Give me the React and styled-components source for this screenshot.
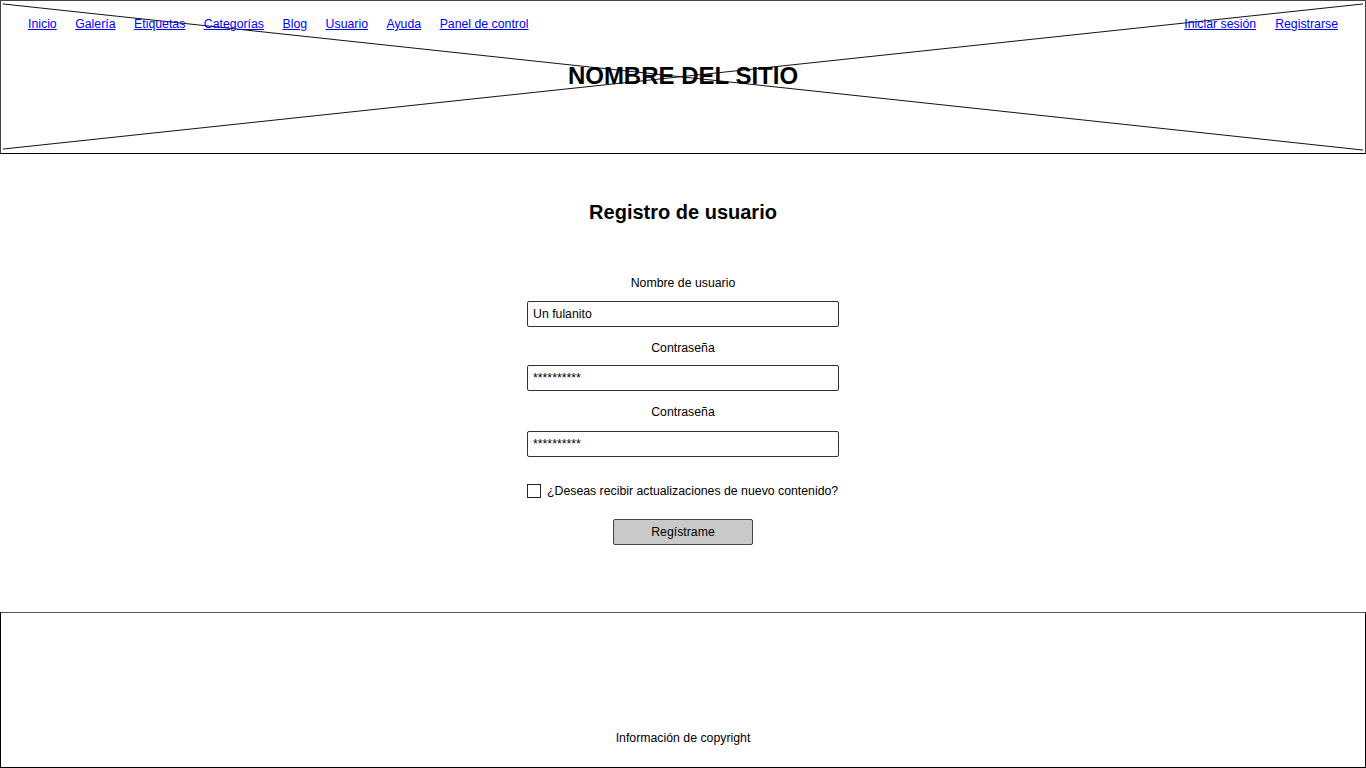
import styled, { createGlobalStyle } from "styled-components";

const GlobalStyle = createGlobalStyle`
  html, body {
    margin: 0;
    padding: 0;
    background: #fff;
  }
  body {
    font-family: "Liberation Sans", Arial, sans-serif;
    color: #000;
  }
`;

const hand = `font-family: "Comic Sans MS", "Liberation Sans", Arial, sans-serif; font-size: 12.3px;`;

const Page = styled.div`
  width: 1366px;
  height: 768px;
  display: flex;
  flex-direction: column;
  overflow: hidden;
`;

const Header = styled.header`
  position: relative;
  height: 154px;
  box-sizing: border-box;
  border: 1px solid #444;
  border-bottom-color: #000;
  display: flex;
  flex-direction: column;
`;

// placeholder image cross behind the header contents
const Cross = styled.svg`
  position: absolute;
  inset: 0;
  width: 100%;
  height: 100%;
  pointer-events: none;
`;

const NavBar = styled.nav`
  position: relative;
  display: flex;
  justify-content: space-between;
  padding: 14px 27px 0 27px;
  height: 18px;
`;

const NavGroup = styled.div`
  display: flex;
  gap: ${(p) => p.$gap || 18.5}px;
`;

const NavLink = styled.a`
  ${hand}
  color: #0000ff;
  text-decoration: underline;
  line-height: 18px;
  cursor: pointer;
`;

const SiteName = styled.h1`
  position: relative;
  margin: 29px 0 0;
  text-align: center;
  font-size: 24px;
  line-height: 28px;
  font-weight: bold;
  font-family: "Liberation Sans", Arial, sans-serif;
`;

const Main = styled.main`
  flex: 1;
  display: flex;
  flex-direction: column;
  align-items: center;
  padding-top: 46px;
`;

const Title = styled.h2`
  margin: 0 0 51px;
  font-size: 20px;
  line-height: 24px;
  font-weight: bold;
`;

const Form = styled.form`
  width: 312px;
  display: flex;
  flex-direction: column;
  align-items: center;
`;

const Label = styled.label`
  ${hand}
  line-height: 16px;
  margin-top: ${(p) => p.$top || 0}px;
  margin-bottom: ${(p) => p.$bottom || 10}px;
`;

const TextInput = styled.input`
  ${hand}
  width: 312px;
  height: 26px;
  box-sizing: border-box;
  border: 1px solid #333;
  border-radius: 2px;
  padding: 0 5px;
  color: #000;
  background: #fff;
  outline: none;
`;

const CheckRow = styled.label`
  ${hand}
  align-self: stretch;
  display: flex;
  align-items: center;
  gap: 6px;
  line-height: 16px;
  margin-top: 26px;
  white-space: nowrap;
`;

const Check = styled.input`
  appearance: none;
  margin: 0;
  width: 14px;
  height: 14px;
  box-sizing: border-box;
  border: 1px solid #222;
  background: #fff;
  flex: none;
`;

const Button = styled.button`
  ${hand}
  margin-top: 20px;
  width: 140px;
  height: 26px;
  box-sizing: border-box;
  border: 1px solid #444;
  border-radius: 2px;
  background: #c9c9c9;
  color: #000;
  padding: 0;
  cursor: pointer;
`;

const Footer = styled.footer`
  height: 156px;
  box-sizing: border-box;
  border: 1px solid #000;
  border-top-color: #555;
  display: flex;
  flex-direction: column;
  justify-content: flex-end;
  align-items: center;
  padding-bottom: 21px;
`;

const Copyright = styled.span`
  ${hand}
  line-height: 16px;
`;

const leftLinks = ["Inicio", "Galería", "Etiquetas", "Categorías", "Blog", "Usuario", "Ayuda", "Panel de control"];
const rightLinks = ["Iniciar sesión", "Registrarse"];

export default function App() {
  return (
    <>
      <GlobalStyle />
      <Page>
        <Header>
          <Cross viewBox="0 0 1366 154" preserveAspectRatio="none">
            <line x1="2" y1="3" x2="1364" y2="151" stroke="#111" strokeWidth="1" />
            <line x1="2" y1="150" x2="1364" y2="3" stroke="#111" strokeWidth="1" />
          </Cross>
          <NavBar>
            <NavGroup>
              {leftLinks.map((l) => (
                <NavLink key={l}>{l}</NavLink>
              ))}
            </NavGroup>
            <NavGroup $gap={19}>
              {rightLinks.map((l) => (
                <NavLink key={l}>{l}</NavLink>
              ))}
            </NavGroup>
          </NavBar>
          <SiteName>NOMBRE DEL SITIO</SiteName>
        </Header>

        <Main>
          <Title>Registro de usuario</Title>
          <Form onSubmit={(e) => e.preventDefault()}>
            <Label>Nombre de usuario</Label>
            <TextInput defaultValue="Un fulanito" />
            <Label $top={13} $bottom={9}>Contraseña</Label>
            <TextInput defaultValue="**********" />
            <Label $top={13} $bottom={11}>Contraseña</Label>
            <TextInput defaultValue="**********" />
            <CheckRow>
              <Check type="checkbox" />
              ¿Deseas recibir actualizaciones de nuevo contenido?
            </CheckRow>
            <Button type="submit">Regístrame</Button>
          </Form>
        </Main>

        <Footer>
          <Copyright>Información de copyright</Copyright>
        </Footer>
      </Page>
    </>
  );
}
